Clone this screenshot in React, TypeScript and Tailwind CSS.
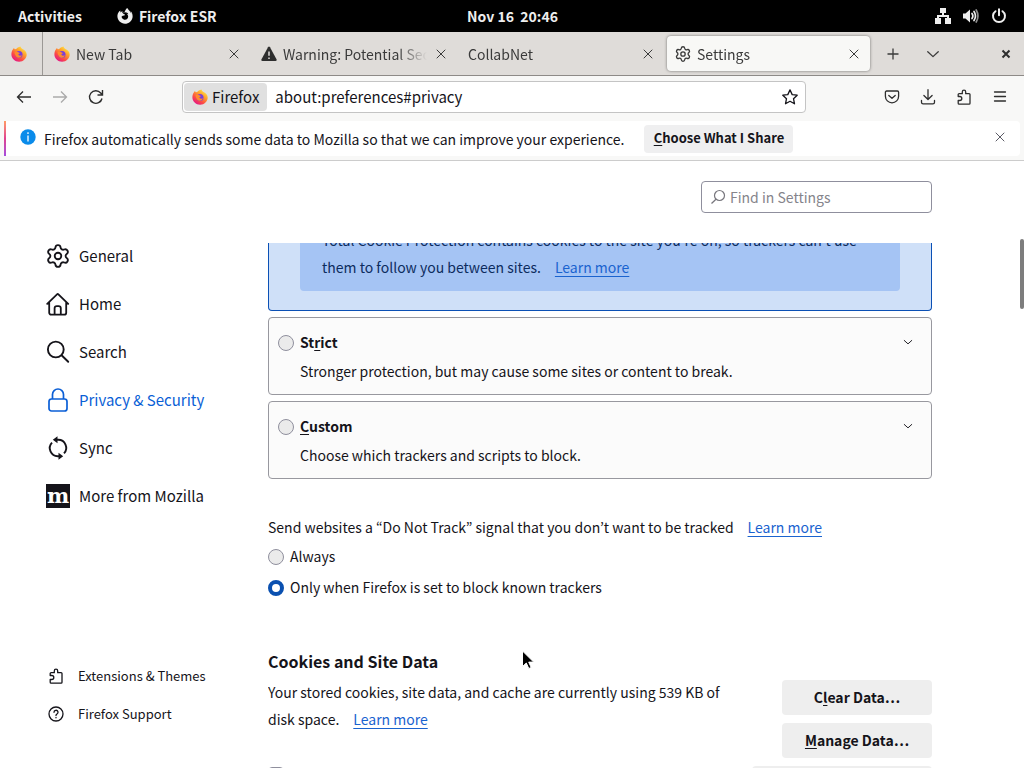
import { useState } from "react"
import type { ReactNode } from "react"
import { Settings } from "lucide-react";
import { FaFirefoxBrowser } from "react-icons/fa";

type IconProps = { className?: string };

const FirefoxLogo = () => (
    <svg viewBox="0 0 16 16" className="size-4 shrink-0">
        <defs>
            <linearGradient id="flame" x1="0.85" y1="0.05" x2="0.2" y2="0.95">
                <stop offset="0" stopColor="#fff04a" />
                <stop offset="0.35" stopColor="#ffa32b" />
                <stop offset="0.7" stopColor="#fb4a46" />
                <stop offset="1" stopColor="#e3148a" />
            </linearGradient>
        </defs>
        <path d="M2 3.2 2.9 1.9l.9 1.3 1.4-.2C6 1.700 7.300 1 9.500.4c.3 1.200 1 1.700 2 2.600C14 4 15.700 6 15.700 8.500c0 4-3.400 7.200-7.600 7.200S.4 12.500.4 8.500C.4 6.300 1 4.500 2 3.200Z" fill="url(#flame)" />
        <circle cx="8" cy="8.500" r="3.500" fill="#7a3fd8" />
        <path d="M3.600 6c1.300-.9 2.600-.7 3.600.2.900.2 1.600.5 1.900 1-.9.3-1.600.700-1.700 1.500.5 1 2 1.300 3.500.6-.6 2-2.200 2.900-4 2.400C4.800 11 3.600 8.700 3.600 6Z" fill="#ff8a2c" />
    </svg>
);

const WarningIcon = () => (
    <svg viewBox="0 0 16 16" className="size-4 shrink-0">
        <path d="M7 1.200a1.200 1.200 0 0 1 2 0l6.500 12.100a1.200 1.200 0 0 1-1 1.700h-13a1.200 1.200 0 0 1-1-1.700Z" fill="#2e2e2e" />
        <path d="M8 5.500v4.200M8 11.500v1.500" stroke="#e0ddda" strokeWidth="1.500" />
    </svg>
);

const CloseIcon = ({ className }: IconProps) => (
    <svg viewBox="0 0 16 16" className={className} fill="none" stroke="currentColor" strokeLinecap="round">
        <path d="m4 4 8 8M12 4l-8 8" />
    </svg>
);

const ChevronIcon = ({ className }: IconProps) => (
    <svg viewBox="0 0 16 16" className={className} fill="none" stroke="currentColor" strokeWidth="1.500" strokeLinecap="round" strokeLinejoin="round">
        <path d="m2 5.500 6 5.500 6-5.500" />
    </svg>
);

const PuzzleIcon = ({ className }: IconProps) => (
    <svg viewBox="0 0 16 16" className={className} fill="none" stroke="currentColor" strokeWidth="1.300" strokeLinejoin="round">
        <path d="M2.200 7.500V5.600a.9.900 0 0 1 .9-.9h3.200V2.900a1.700 1.700 0 0 1 3.400 0v1.800h3.400a.9.900 0 0 1 .9.900v8.700a.9.900 0 0 1-.9.900H3.100a.9.900 0 0 1-.9-.9V11.500h1.600a2 2 0 0 0 0-4H2.200Z" />
    </svg>
);

const HomeIcon = () => (
    <svg viewBox="0 0 24 24" className="size-6" fill="none" stroke="currentColor" strokeWidth="1.800" strokeLinecap="round" strokeLinejoin="round">
        <path d="M1.200 11.800 11 2.300a1 1 0 0 1 1.400 0l9.800 9.500M3.200 10.300v10.400a2 2 0 0 0 2 2h13a2 2 0 0 0 2-2V10.300M8.600 22.500v-6.200a2.200 2.200 0 0 1 2.200-2.200h1.800a2.200 2.200 0 0 1 2.200 2.200v6.200" />
    </svg>
);

const SearchIcon = () => (
    <svg viewBox="0 0 24 24" className="size-6" fill="none" stroke="currentColor" strokeWidth="1.900" strokeLinecap="round">
        <circle cx="9.800" cy="9.500" r="7.900" />
        <path d="m15.600 15.300 6.600 6.500" />
    </svg>
);

const LockIcon = () => (
    <svg viewBox="0 0 24 24" className="size-6" fill="none" stroke="currentColor" strokeWidth="1.700">
        <rect x="3" y="11" width="18" height="12" rx="2.500" />
        <path d="M6.500 11V6.500a5.500 5.500 0 0 1 11 0V11" />
    </svg>
);

const SyncIcon = () => (
    <svg viewBox="0 0 24 24" className="size-6" fill="none" stroke="currentColor" strokeWidth="1.900">
        <path d="M9.500 3.800h2.500a8 8 0 0 1 6 13.500M14 20.200h-2a8 8 0 0 1-6-13.500" />
        <path d="M11.500.3v7L6.800 3.800ZM12.500 16.700v7l4.700-3.500Z" fill="currentColor" stroke="none" />
    </svg>
);

const MozillaIcon = () => (
    <span className="flex size-6 items-center justify-center bg-[#15141a] pb-px font-['DejaVu_Serif',serif] text-[21px] font-bold leading-5 text-white">m</span>
);

const tabs = [
    { title: "New Tab", icon: <FirefoxLogo /> },
    { title: "Warning: Potential Security Risk Ahead", icon: <WarningIcon /> },
    { title: "CollabNet", icon: null },
    { title: "Settings", icon: <Settings viewBox="1 1 22 22" size={16} strokeWidth={1.8} className="shrink-0" />, active: true },
];

const categories = [
    { name: "General", icon: <Settings viewBox="1 1 22 22" size={24} strokeWidth={1.7} /> },
    { name: "Home", icon: <HomeIcon /> },
    { name: "Search", icon: <SearchIcon /> },
    { name: "Privacy & Security", icon: <LockIcon /> },
    { name: "Sync", icon: <SyncIcon /> },
    { name: "More from Mozilla", icon: <MozillaIcon /> },
];

const radioStyle = "size-4 shrink-0 appearance-none rounded-full border border-[#8f8f9d] bg-[#ebebeb] checked:border-4 checked:border-[#0a50b0] checked:bg-white";

const LearnMore = () => (
    <a href="#learn" className="ml-3.5 text-[#1a63cf] underline underline-offset-3">Learn more</a>
);

function TopBar() {
    return (
        <div className="grid h-8 shrink-0 grid-cols-3 items-center bg-black pl-[18px] pr-[17px] text-sm font-bold text-[#eeeeee]">
            <div className="flex items-center gap-[35px]">
                <button>Activities</button>
                <button className="flex items-center gap-1.5">
                    <FaFirefoxBrowser size={16} />
                    Firefox ESR
                </button>
            </div>
            <button className="whitespace-pre text-center">Nov 16  20:46</button>
            <div className="flex items-center justify-end gap-3">
                <svg viewBox="0 0 16 16" className="size-4" fill="currentColor">
                    <path d="M5 0h6v5H9v2h5v3h2v6h-6v-6h2V9H4v1h2v6H0v-6h2V7h5V5H5Z" />
                </svg>
                <svg viewBox="0 0 16 16" className="size-4" fill="none" stroke="currentColor" strokeWidth="1.700" strokeLinecap="round">
                    <path d="M0 5.500h2.500L7 1.500v13L2.500 10.500H0Z" fill="currentColor" stroke="none" />
                    <path d="M9 5.500q1.800 2.500 0 5M11 3.500q3 4.500 0 9" />
                    <path d="M13.200 2q3.500 6 0 12" opacity="0.600" />
                </svg>
                <svg viewBox="0 0 16 16" className="size-4" fill="none" stroke="currentColor" strokeWidth="2" strokeLinecap="round">
                    <path d="M4.500 3.200a6 6 0 1 0 7 0M8 1.200v6" />
                </svg>
            </div>
        </div>
    );
}

function TabBar() {
    return (
        <div className="flex h-11 shrink-0 items-stretch border-b border-[#8d8a87] bg-[#dfdcd9] text-sm text-[#3a3a3a]">
            <button aria-label="Pinned tab" className="flex w-[43px] items-center justify-center border-r border-[#9b9895] pr-1">
                <FirefoxLogo />
            </button>
            {tabs.map((tab) => (
                <div key={tab.title} className={tab.active ? "w-[209px] px-[3px] py-1" : "w-[207px] px-[3px] py-1"}>
                    <div className={tab.active
                        ? "flex h-full items-center gap-1.5 rounded bg-[#f8f8f6] px-2 shadow-[0_0_3px_rgba(0,0,0,0.5)]"
                        : "flex h-full items-center gap-1.5 pl-2 pr-[5px]"}>
                        {tab.icon}
                        <span className="min-w-0 flex-1 overflow-hidden whitespace-nowrap [mask-image:linear-gradient(to_left,transparent,black_30px)]">{tab.title}</span>
                        <button aria-label={"Close " + tab.title}><CloseIcon className="size-4" /></button>
                    </div>
                </div>
            ))}
            <button aria-label="New tab" className="flex w-10 items-center justify-center">
                <svg viewBox="0 0 16 16" className="size-4" stroke="currentColor" strokeWidth="1.300"><path d="M8 2.500v11M2.500 8h11" /></svg>
            </button>
            <button aria-label="List all tabs" className="flex w-10 items-center justify-center"><ChevronIcon className="size-3.5" /></button>
            <button aria-label="Close window" className="ml-auto mr-2.5 text-[#2e2e2e]">
                <svg viewBox="0 0 16 16" className="size-4" stroke="currentColor" strokeWidth="2"><path d="m4.500 4.500 7 7M11.500 4.500l-7 7" /></svg>
            </button>
        </div>
    );
}

function Toolbar() {
    return (
        <div className="flex h-[42px] shrink-0 items-center bg-[#f8f8f7] px-4 text-[#2e2e2e]">
            <div className="flex w-[166px] gap-5">
                <button aria-label="Back">
                    <svg viewBox="0 0 16 16" className="size-4" fill="none" stroke="currentColor" strokeWidth="1.300"><path d="M15 8H1.500M7 2.500 1.500 8 7 13.500" /></svg>
                </button>
                <button aria-label="Forward" className="text-[#aaaaaa]">
                    <svg viewBox="0 0 16 16" className="size-4" fill="none" stroke="currentColor" strokeWidth="1.300"><path d="M1 8h13.500M9 2.500 14.500 8 9 13.500" /></svg>
                </button>
                <button aria-label="Reload">
                    <svg viewBox="0 0 16 16" className="size-4" fill="none" stroke="currentColor" strokeWidth="1.400"><path d="M14 9.500A6.300 6.300 0 1 1 12.700 4L14 5.500M14.500 1v5h-5" /></svg>
                </button>
            </div>
            <div className="flex h-8 max-w-[624px] flex-1 items-center rounded border border-[#c4c4c4] bg-white pl-px pr-[7px] text-[15px] text-[#15141a]">
                <span className="flex h-7 items-center gap-1 rounded bg-[#e0e0e0] px-2"><FirefoxLogo />Firefox</span>
                <input aria-label="Address" defaultValue="about:preferences#privacy" className="min-w-0 flex-1 bg-transparent pl-2 outline-none" />
                <button aria-label="Bookmark this page">
                    <svg viewBox="0 0 16 16" className="size-4" fill="none" stroke="currentColor" strokeWidth="1.300" strokeLinejoin="round"><path d="m8 .9 2.200 4.700 5 .6-3.700 3.500 1 5.100L8 12.300l-4.500 2.500 1-5.100L.8 6.200l5-.6Z" /></svg>
                </button>
            </div>
            <div className="ml-auto flex gap-5">
                <button aria-label="Save to Pocket">
                    <svg viewBox="0 0 16 16" className="size-4" fill="none" stroke="currentColor" strokeWidth="1.300" strokeLinecap="round" strokeLinejoin="round"><path d="M2.600 2h10.800a1.200 1.200 0 0 1 1.200 1.200v4a6.600 6.600 0 0 1-13.200 0v-4A1.200 1.200 0 0 1 2.600 2ZM4.800 6.500 8 9.300l3.200-2.800" /></svg>
                </button>
                <button aria-label="Downloads">
                    <svg viewBox="0 0 16 16" className="size-4" fill="none" stroke="currentColor" strokeWidth="1.300" strokeLinecap="round" strokeLinejoin="round"><path d="M8 .7v9.500M3.900 6.500 8 10.500l4.100-4M1.500 11.500v1.700a1.600 1.600 0 0 0 1.600 1.600h9.800a1.600 1.600 0 0 0 1.600-1.600v-1.700" /></svg>
                </button>
                <button aria-label="Extensions"><PuzzleIcon className="size-4" /></button>
                <button aria-label="Menu">
                    <svg viewBox="0 0 16 16" className="size-4" stroke="currentColor" strokeWidth="1.300" strokeLinecap="round"><path d="M2.500 3h11M2.500 7.500h11M2.500 12h11" /></svg>
                </button>
            </div>
        </div>
    );
}

function Notification() {
    return (
        <div className="shrink-0 border-b border-[#cccccc] bg-[#f8f8f7] px-1 pt-[3px] pb-1">
            <div className="flex h-[35px] items-center rounded bg-white pr-3 text-sm text-[#15141a]">
                <span className="h-full w-0.5 bg-linear-to-b from-[#ff9a63] via-[#e0408f] to-[#a54ade]" />
                <svg viewBox="0 0 16 16" className="ml-3.5 mr-2 mb-1 size-4">
                    <circle cx="8" cy="8" r="7.700" fill="#0a8bea" />
                    <path d="M8 3.300v1.700M8 6.500v6" stroke="white" strokeWidth="1.300" />
                </svg>
                <span>Firefox automatically sends some data to Mozilla so that we can improve your experience.</span>
                <button className="ml-5 h-7 w-[149px] rounded bg-[#efeff0] text-[13px] font-bold"><u className="underline-offset-2">C</u>hoose What I Share</button>
                <button aria-label="Dismiss" className="mb-1 ml-auto text-[#5b5b66]"><CloseIcon className="size-4" /></button>
            </div>
        </div>
    );
}

function Sidebar() {
    const [selected, setSelected] = useState<string>("Privacy & Security");
    return (
        <nav className="flex w-[268px] shrink-0 flex-col pb-[35px] pl-[46px] pt-[71px]">
            {categories.map((item) => (
                <button
                    key={item.name}
                    onClick={() => setSelected(item.name)}
                    className={selected === item.name
                        ? "flex h-12 items-center gap-[9px] text-[15px] text-[#0b5fd6]"
                        : "flex h-12 items-center gap-[9px] text-[15px] text-[#15141a]"}
                >
                    {item.icon}
                    {item.name}
                </button>
            ))}
            <div className="mt-auto flex flex-col text-[13px] text-[#15141a]">
                <a href="#addons" className="flex h-[38px] items-center gap-3.5 pl-0.5"><PuzzleIcon className="size-4" />Extensions &amp; Themes</a>
                <a href="#support" className="flex h-[38px] items-center gap-3.5 pl-0.5">
                    <svg viewBox="0 0 16 16" className="size-4" fill="none" stroke="currentColor" strokeWidth="1.300" strokeLinecap="round">
                        <circle cx="8" cy="8" r="7" />
                        <path d="M6 6.300a2 2 0 1 1 3 1.700c-.7.400-1 .7-1 1.400M8 11.500v.3" />
                    </svg>
                    Firefox Support
                </a>
            </div>
        </nav>
    );
}

function TrackingOption({ id, label, description }: { id: string; label: ReactNode; description: string }) {
    return (
        <div className="mt-1.5 flex h-[78px] gap-1.5 rounded border border-[#98989f] bg-[#fbfbfb] pl-[9px] pr-3.5 pt-[11px]">
            <input type="radio" name="tracking" id={id} className={radioStyle + " mt-1.5"} />
            <div className="flex-1">
                <label htmlFor={id} className="block h-[29px] font-bold">{label}</label>
                <p>{description}</p>
            </div>
            <button aria-label="Expand" className="mt-1 self-start"><ChevronIcon className="m-1 size-2.5" /></button>
        </div>
    );
}

function Preferences() {
    return (
        <main className="flex min-h-0 max-w-[664px] flex-1 flex-col text-sm leading-[27px] text-[#15141a]">
            <div className="flex h-[82px] shrink-0 items-start justify-end pt-5">
                <label className="flex h-8 w-[231px] items-center gap-1 rounded border border-[#8f8f9d] pl-2 text-[#77767d]">
                    <svg viewBox="0 0 16 16" className="size-4" fill="none" stroke="currentColor" strokeWidth="1.200"><circle cx="9.500" cy="6.500" r="5" /><path d="M6 10.200 1.500 14.500" /></svg>
                    <input type="search" aria-label="Find in Settings" placeholder="Find in Settings" className="min-w-0 flex-1 bg-transparent outline-none placeholder:text-[#85848b]" />
                </label>
            </div>
            <div className="min-h-0 flex-1 overflow-hidden">
                <div className="-mt-4 rounded-b border border-t-0 border-[#0b50b5] bg-[#cfe0f8] px-[31px] pb-[19px]">
                    <p className="rounded-b bg-[#a5c4f4] px-[22px] pb-2.5 text-[#0d2c5e]">
                        Total Cookie Protection contains cookies to the site you’re on, so trackers can’t use them to follow you between sites.<LearnMore />
                    </p>
                </div>
                <TrackingOption id="strict" label={<>St<u className="underline-offset-2">r</u>ict</>} description="Stronger protection, but may cause some sites or content to break." />
                <TrackingOption id="custom" label={<><u className="underline-offset-2">C</u>ustom</>} description="Choose which trackers and scripts to block." />

                <fieldset className="mt-[35px]">
                    <p>Send websites a “Do Not Track” signal that you don’t want to be tracked<LearnMore /></p>
                    <label className="flex h-[31px] items-center gap-1.5">
                        <input type="radio" name="dnt" className={radioStyle} />
                        Always
                    </label>
                    <label className="flex h-[31px] items-center gap-1.5">
                        <input type="radio" name="dnt" defaultChecked className={radioStyle} />
                        Only when Firefox is set to block known trackers
                    </label>
                </fieldset>

                <h2 className="mt-[45px] text-base font-bold leading-[27px]">Cookies and Site Data</h2>
                <div className="mt-1 flex items-start justify-between">
                    <div className="w-[480px]">
                        <p>Your stored cookies, site data, and cache are currently using 539 KB of disk space.<LearnMore /></p>
                        <label className="mt-7 flex items-center gap-1.5 whitespace-nowrap">
                            <input type="checkbox" className="size-4 appearance-none rounded-sm border border-[#8f8f9d] bg-[#ebebeb]" />
                            Delete cookies and site data when Firefox is closed
                        </label>
                    </div>
                    <div className="mt-px flex flex-col items-end gap-2 font-bold">
                        <button className="h-[35px] w-[150px] rounded bg-[#eeeeee]">C<u className="underline-offset-2">l</u>ear Data…</button>
                        <button className="h-[35px] w-[150px] rounded bg-[#eeeeee]"><u className="underline-offset-2">M</u>anage Data…</button>
                        <button className="h-[35px] w-[180px] rounded bg-[#eeeeee]">Manage E<u>x</u>ceptions…</button>
                    </div>
                </div>
            </div>
        </main>
    );
}

export default function App() {
    return (
        <div className="relative flex h-screen flex-col overflow-hidden bg-white font-['Noto_Sans_CJK_KR','Noto_Sans',sans-serif]">
            <TopBar />
            <TabBar />
            <Toolbar />
            <Notification />
            <div className="flex min-h-0 flex-1">
                <Sidebar />
                <Preferences />
            </div>
            {/* overlay scrollbar */}
            <span className="absolute right-0 top-[239px] h-[70px] w-1 rounded-full bg-[#7d7d7d]" />
            {/* mouse pointer */}
            <svg viewBox="0 0 14 20" className="absolute left-[521px] top-[650px] h-5 w-3.5">
                <path d="M1.500 1v15.500l3.800-3.500 2.500 5.500 2.400-1-2.500-5.400h5Z" fill="black" stroke="white" />
            </svg>
        </div>
    )
}
